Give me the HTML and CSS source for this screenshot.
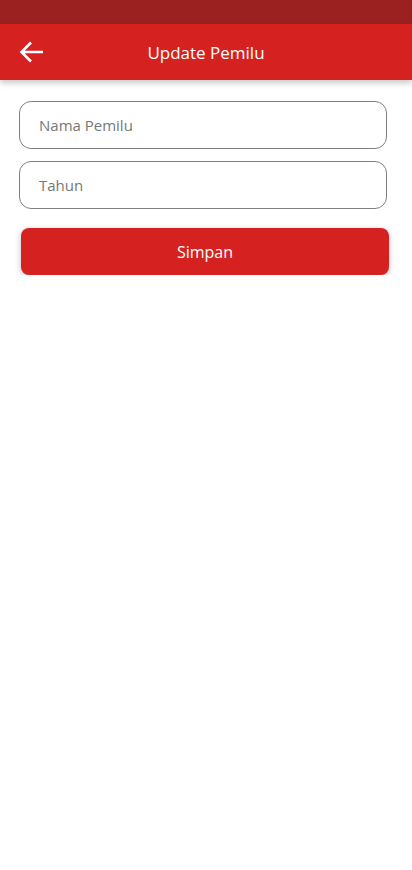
FILE: index.html
```html
<!DOCTYPE html>
<html>
<head>
<meta charset="utf-8">
<link rel="stylesheet" href="styles.css">
</head>
<body>
<div class="status"></div>
<header class="appbar">
  <svg class="back" width="26" height="24" viewBox="0 0 26 24"><path d="M24 12H3M12 2.5L2.5 12L12 21.5" fill="none" stroke="#fff" stroke-width="2.6"/></svg>
  <h1 class="title">Update Pemilu</h1>
</header>
<main class="form">
  <div class="field">Nama Pemilu</div>
  <div class="field">Tahun</div>
  <button class="btn">Simpan</button>
</main>
</body>
</html>
```
FILE: styles.css
```css
body { margin: 0; background: #fff; font-family: "Open Sans", "Noto Sans", sans-serif; }
.status { height: 24px; background: #9b2121; }
.appbar { height: 56px; background: #d62121; display: flex; align-items: center; position: relative; box-shadow: 0 3px 6px rgba(0,0,0,0.22); }
.back { margin-left: 19px; }
.title { position: absolute; left: 0; right: 0; text-align: center; margin: 0; font-size: 17px; font-weight: 400; color: #fff; pointer-events: none; }
.form { padding: 21px 25px 0 19px; display: flex; flex-direction: column; gap: 12px; }
.field { height: 46px; border: 1px solid #808080; border-radius: 12px; display: flex; align-items: center; padding-left: 19px; font-size: 15px; color: #777; }
.btn { margin-top: 7px; margin-left: 2px; width: 368px; height: 47px; border: none; border-radius: 8px; background: #d62121; color: #fff; font-family: inherit; font-size: 16px; box-shadow: 0 2px 6px rgba(0,0,0,0.25); }
```
